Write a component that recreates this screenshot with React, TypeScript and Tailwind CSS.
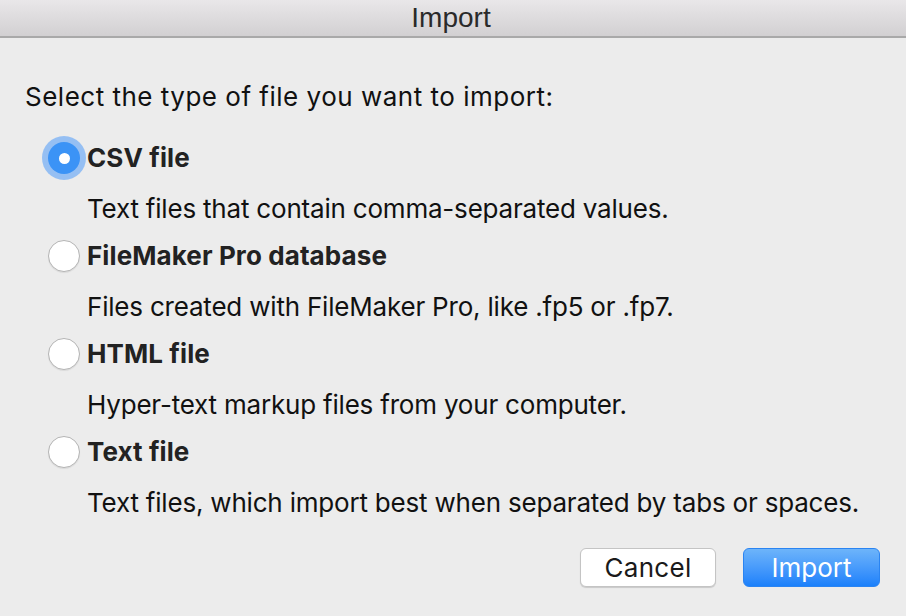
import { useState } from "react";

const options = [
  { id: "csv", title: "CSV file", desc: "Text files that contain comma-separated values." },
  { id: "fm", title: "FileMaker Pro database", desc: "Files created with FileMaker Pro, like .fp5 or .fp7." },
  { id: "html", title: "HTML file", desc: "Hyper-text markup files from your computer." },
  { id: "text", title: "Text file", desc: "Text files, which import best when separated by tabs or spaces." },
];

function Radio({ checked }: { checked: boolean }) {
  if (checked) {
    return (
      <span className="flex h-[32px] w-[32px] items-center justify-center rounded-full bg-[#3b93f6] shadow-[0_0_0_6px_rgba(120,176,245,0.75)]">
        <span className="h-[11px] w-[11px] rounded-full bg-white" />
      </span>
    );
  }
  return (
    <span className="block h-[32px] w-[32px] rounded-full border border-[#b4b4b4] bg-white shadow-[0_1px_1px_rgba(0,0,0,0.08)]" />
  );
}

export default function App() {
  const [selected, setSelected] = useState("csv");

  return (
    <div
      className="flex h-[616px] w-[906px] flex-col bg-[#ececec] text-[#111]"
      style={{ fontFamily: 'Inter, "Liberation Sans", Arial, sans-serif' }}
    >
      <div className="flex h-[38px] shrink-0 items-center justify-center border-b-2 border-[#a9a9a9] bg-gradient-to-b from-[#e9e7e9] to-[#d2d0d2]">
        <span className="pr-[4px] font-['Liberation_Sans',Arial,sans-serif] text-[28px] leading-none text-[#2a2a2a]">Import</span>
      </div>

      <div className="flex flex-1 flex-col pl-[25px] pr-[26px] pt-[44px]">
        <p className="h-[30px] text-[26px] leading-[30px] tracking-[0.5px]">Select the type of file you want to import:</p>

        <div className="mt-[23px] flex flex-col pl-[23px]">
          {options.map((o) => (
            <div key={o.id} className="flex flex-col">
              <button
                onClick={() => setSelected(o.id)}
                className="flex h-[46px] items-center gap-[7px] text-left"
              >
                <Radio checked={selected === o.id} />
                <span className="text-[26px] font-bold leading-[30px] tracking-[0.1px] text-[#222]">{o.title}</span>
              </button>
              <p className="h-[52px] whitespace-nowrap pl-[39px] pt-[13px] text-[26px] leading-[30px] tracking-[-0.2px]">
                {o.desc}
              </p>
            </div>
          ))}
        </div>

        <div className="mt-[21px] flex justify-end gap-[27px]">
          <button className="h-[39px] w-[136px] rounded-[6px] border border-[#c4c4c4] bg-white text-[26px] leading-none tracking-[0.3px] text-[#1a1a1a] shadow-[0_1px_1px_rgba(0,0,0,0.15)]">
            Cancel
          </button>
          <button className="h-[39px] w-[137px] rounded-[6px] border border-[#2a84f2] bg-gradient-to-b from-[#6db4fa] to-[#1a80fb] text-[26px] leading-none text-white">
            Import
          </button>
        </div>
      </div>
    </div>
  );
}
